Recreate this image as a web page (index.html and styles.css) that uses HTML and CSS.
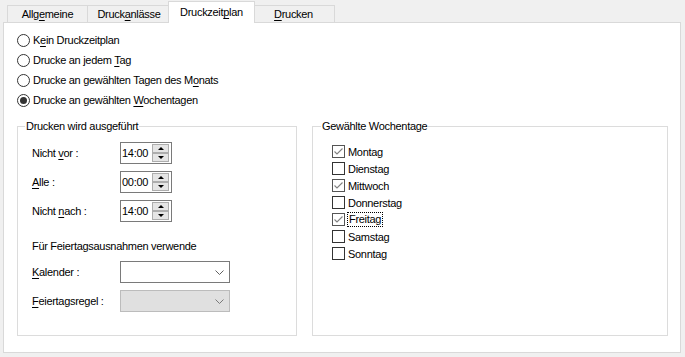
FILE: index.html
```html
<!DOCTYPE html>
<html lang="de">
<head>
  <meta charset="UTF-8">
  <title>Druckzeitplan</title>
  <link rel="stylesheet" href="styles.css">
</head>
<body>

<div class="tabs">
  <div class="tab tab-1">Allg<u>e</u>meine</div>
  <div class="tab tab-2">Druck<u>a</u>nlässe</div>
  <div class="tab tab-active">Druckzeit<u>p</u>lan</div>
  <div class="tab tab-4"><u>D</u>rucken</div>
</div>

<div class="panel">
  <div class="radios">
    <div class="radio-row"><span class="radio"></span><span>K<u>e</u>in Druckzeitplan</span></div>
    <div class="radio-row"><span class="radio"></span><span>Drucke an jedem <u>T</u>ag</span></div>
    <div class="radio-row"><span class="radio"></span><span>Drucke an gewählten Tagen des M<u>o</u>nats</span></div>
    <div class="radio-row"><span class="radio checked"></span><span>Drucke an gewählten <u>W</u>ochentagen</span></div>
  </div>

  <div class="groups">
    <fieldset class="group group-time">
      <legend>Drucken wird ausgeführt</legend>

      <div class="field-list">
        <div class="field">
          <span class="label">Nicht <u>v</u>or :</span>
          <div class="spin">
            <span class="spin-value">14:00</span>
            <div class="spin-buttons">
              <div class="spin-btn"><span class="arrow-up"></span></div>
              <div class="spin-btn"><span class="arrow-down"></span></div>
            </div>
          </div>
        </div>
        <div class="field">
          <span class="label"><u>A</u>lle :</span>
          <div class="spin">
            <span class="spin-value">00:00</span>
            <div class="spin-buttons">
              <div class="spin-btn"><span class="arrow-up"></span></div>
              <div class="spin-btn"><span class="arrow-down"></span></div>
            </div>
          </div>
        </div>
        <div class="field">
          <span class="label">Nicht <u>n</u>ach :</span>
          <div class="spin">
            <span class="spin-value">14:00</span>
            <div class="spin-buttons">
              <div class="spin-btn"><span class="arrow-up"></span></div>
              <div class="spin-btn"><span class="arrow-down"></span></div>
            </div>
          </div>
        </div>
      </div>

      <div class="holiday-title">Für Feiertagsausnahmen verwende</div>

      <div class="combo-list">
        <div class="field">
          <span class="label"><u>K</u>alender :</span>
          <div class="combo">
            <svg class="chevron" width="9" height="5" viewBox="0 0 9 5"><polyline points="0.5,0.5 4.5,4.5 8.5,0.5" fill="none" stroke="#606060" stroke-width="1"/></svg>
          </div>
        </div>
        <div class="field">
          <span class="label"><u>F</u>eiertagsregel :</span>
          <div class="combo disabled">
            <svg class="chevron" width="9" height="5" viewBox="0 0 9 5"><polyline points="0.5,0.5 4.5,4.5 8.5,0.5" fill="none" stroke="#7a7a7a" stroke-width="1"/></svg>
          </div>
        </div>
      </div>
    </fieldset>

    <fieldset class="group group-days">
      <legend>Gewählte Wochentage</legend>
      <div class="check-row"><span class="check on"><svg width="11" height="11" viewBox="0 0 11 11"><polyline points="1.5,5.5 4,8 9.5,2.5" fill="none" stroke="#808080" stroke-width="1.1"/></svg></span><span>Montag</span></div>
      <div class="check-row"><span class="check"></span><span>Dienstag</span></div>
      <div class="check-row"><span class="check on"><svg width="11" height="11" viewBox="0 0 11 11"><polyline points="1.5,5.5 4,8 9.5,2.5" fill="none" stroke="#808080" stroke-width="1.1"/></svg></span><span>Mittwoch</span></div>
      <div class="check-row"><span class="check"></span><span>Donnerstag</span></div>
      <div class="check-row"><span class="check on"><svg width="11" height="11" viewBox="0 0 11 11"><polyline points="1.5,5.5 4,8 9.5,2.5" fill="none" stroke="#808080" stroke-width="1.1"/></svg></span><span class="focus">Freitag</span></div>
      <div class="check-row"><span class="check"></span><span>Samstag</span></div>
      <div class="check-row"><span class="check"></span><span>Sonntag</span></div>
    </fieldset>
  </div>
</div>

</body>
</html>
```

FILE: styles.css
```css
body {
  margin: 0;
  padding: 1px 0 0 3px;
  background: #f0f0f0;
  font-family: "Liberation Sans", Arial, sans-serif;
  font-size: 11px;
  letter-spacing: -0.3px;
  color: #000;
}

u {
  text-decoration-thickness: 1px;
  text-underline-offset: 2px;
}

/* tabs */
.tabs {
  display: flex;
  align-items: flex-end;
  height: 21px;
  padding-left: 4px;
}

.tab {
  box-sizing: border-box;
  height: 17px;
  line-height: 16px;
  text-align: center;
  border: 1px solid #d9d9d9;
  border-bottom: none;
  background: #f0f0f0;
}

.tab-1 { width: 81px; }
.tab-2 { width: 84px; margin-left: -1px; }
.tab-4 { width: 83px; margin-left: -3px; }

.tab-active {
  position: relative;
  z-index: 1;
  width: 87px;
  height: 22px;
  line-height: 20px;
  margin-left: -3px;
  margin-bottom: -1px;
  background: #fff;
}

/* panel */
.panel {
  box-sizing: border-box;
  width: 678px;
  height: 331px;
  border: 1px solid #d9d9d9;
  background: #fff;
  padding: 7px 12px 0 13px;
}

.radio-row {
  display: flex;
  align-items: center;
  height: 20px;
  gap: 3px;
}

.radio {
  box-sizing: border-box;
  width: 13px;
  height: 13px;
  border: 1px solid #333;
  border-radius: 50%;
  display: flex;
  align-items: center;
  justify-content: center;
}

.radio.checked::after {
  content: "";
  width: 7px;
  height: 7px;
  border-radius: 50%;
  background: #333;
}

/* group boxes */
.groups {
  display: flex;
  gap: 15px;
  margin-top: 9px;
}

.group {
  margin: 0;
  border: 1px solid #dcdcdc;
  min-width: 0;
}

.group legend {
  padding: 0 1px;
  line-height: 14px;
}

.group-time {
  box-sizing: border-box;
  width: 280px;
  padding: 9px 10px 23px 14px;
}

.group-time legend {
  margin-left: -7px;
}

.group-days {
  box-sizing: border-box;
  width: 356px;
  padding: 10px 10px 0 19px;
}

.group-days legend {
  margin-left: -11px;
}

.field-list {
  display: flex;
  flex-direction: column;
  gap: 7px;
}

.field {
  display: flex;
  align-items: center;
  height: 22px;
}

.label {
  width: 88px;
}

.spin {
  box-sizing: border-box;
  width: 52px;
  height: 22px;
  border: 1px solid #7a7a7a;
  display: flex;
  align-items: center;
  justify-content: space-between;
  padding-left: 1px;
}

.spin-buttons {
  display: flex;
  flex-direction: column;
  margin-right: 2px;
}

.spin-btn {
  box-sizing: border-box;
  width: 17px;
  height: 9px;
  background: #e5e5e5;
  border: 1px solid #adadad;
  display: flex;
  align-items: center;
  justify-content: center;
}

.arrow-up {
  border-left: 3px solid transparent;
  border-right: 3px solid transparent;
  border-bottom: 3px solid #000;
}

.arrow-down {
  border-left: 3px solid transparent;
  border-right: 3px solid transparent;
  border-top: 3px solid #000;
}

.holiday-title {
  margin-top: 17px;
  line-height: 14px;
}

.combo-list {
  display: flex;
  flex-direction: column;
  gap: 7px;
  margin-top: 8px;
}

.combo {
  box-sizing: border-box;
  width: 110px;
  height: 22px;
  border: 1px solid #7a7a7a;
  background: #fff;
  display: flex;
  align-items: center;
  justify-content: flex-end;
  padding-right: 5px;
}

.combo.disabled {
  background: #e0e0e0;
  border-color: #bcbcbc;
}

/* checkboxes */
.check-row {
  display: flex;
  align-items: center;
  height: 17px;
  gap: 3px;
}

.check {
  box-sizing: border-box;
  width: 13px;
  height: 13px;
  border: 1px solid #333;
  background: #fff;
  display: flex;
}

.check.on {
  border-color: #555;
}

.focus {
  outline: 1px dotted #000;
  outline-offset: 0;
  padding: 0 1px;
  line-height: 13px;
}
```
